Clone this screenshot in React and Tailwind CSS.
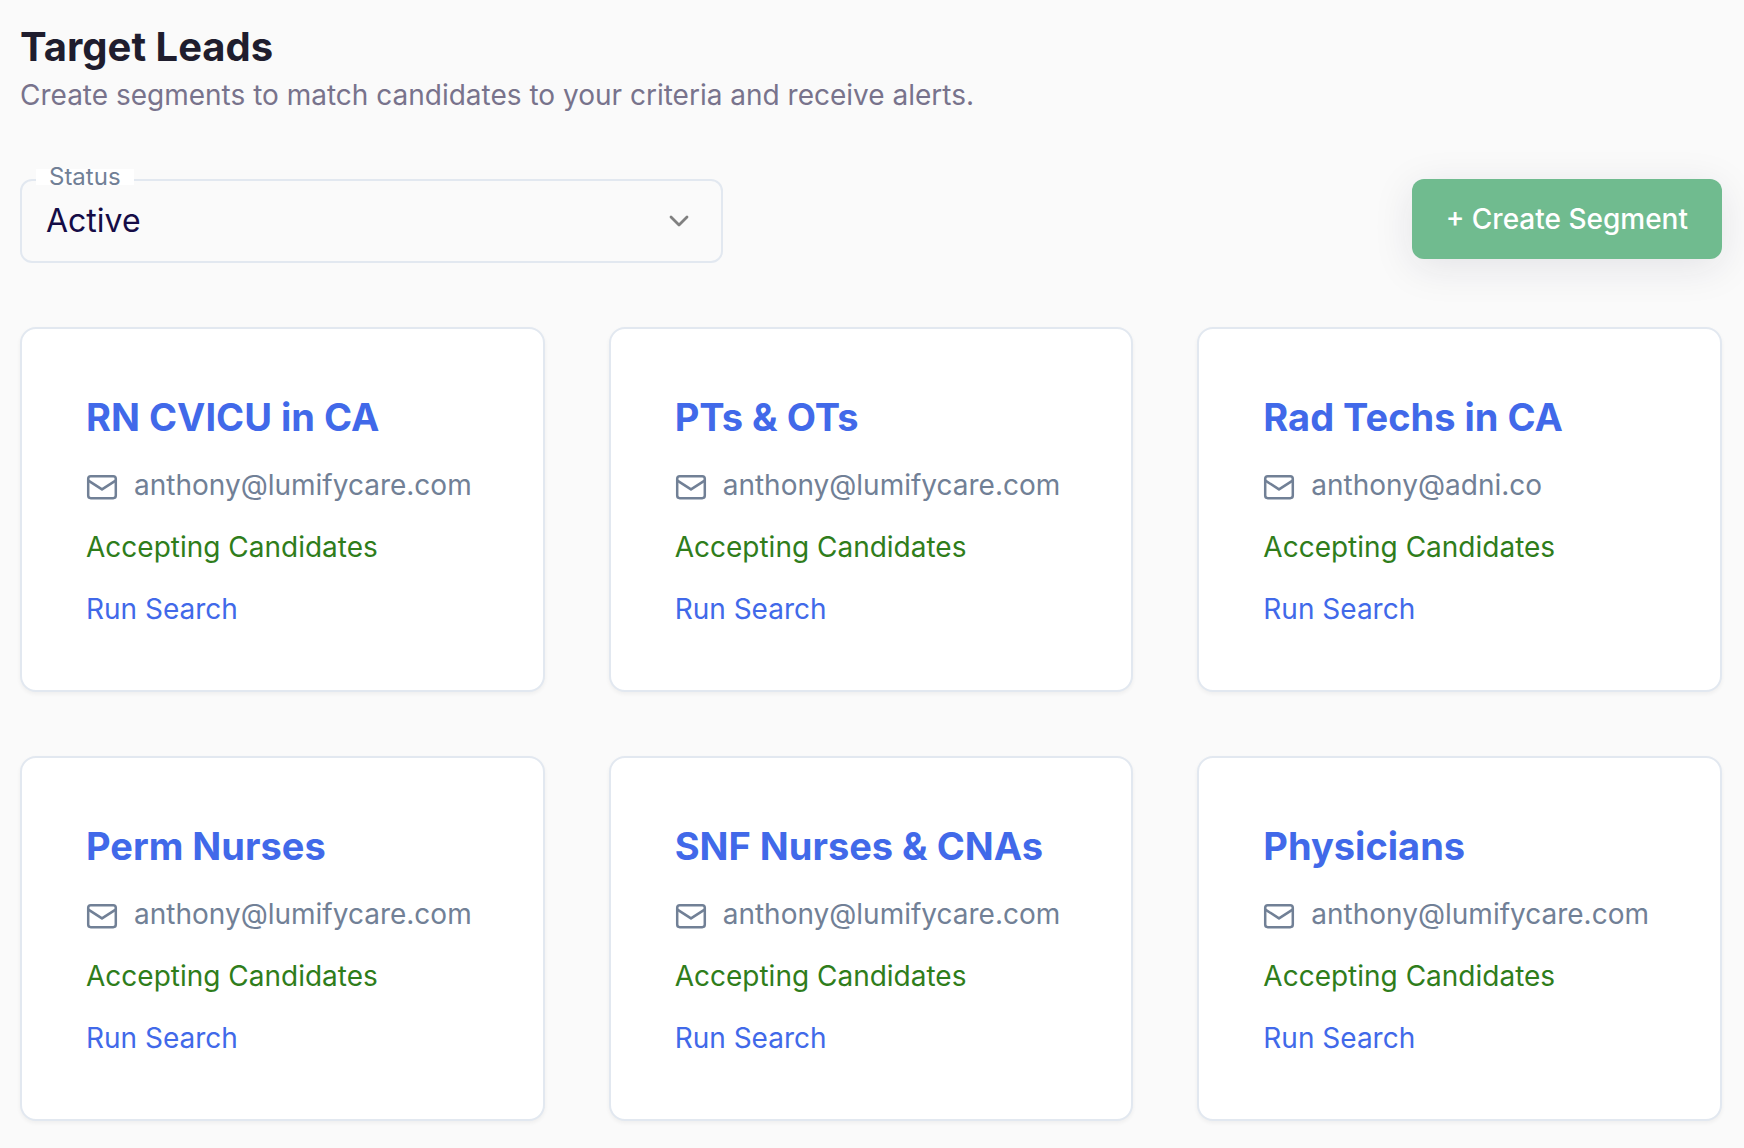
import { useState } from "react";

const SEGMENTS = [
  { id: 1, name: "RN CVICU in CA", email: "anthony@lumifycare.com", status: "active" },
  { id: 2, name: "PTs & OTs", email: "anthony@lumifycare.com", status: "active" },
  { id: 3, name: "Rad Techs in CA", email: "anthony@adni.co", status: "active" },
  { id: 4, name: "Perm Nurses", email: "anthony@lumifycare.com", status: "active" },
  { id: 5, name: "SNF Nurses & CNAs", email: "anthony@lumifycare.com", status: "active" },
  { id: 6, name: "Physicians", email: "anthony@lumifycare.com", status: "active" },
];

function MailIcon() {
  return (
    <svg
      viewBox="0 0 32 32"
      className="mt-1 size-8 shrink-0"
      fill="none"
      stroke="currentColor"
      strokeWidth="2.5"
      strokeLinecap="round"
      strokeLinejoin="round"
      aria-hidden="true"
    >
      <rect x="2.2" y="5.2" width="27.6" height="22" rx="2.6" />
      <path d="M2.4 9.6L16 18.4L29.6 9.6" />
    </svg>
  );
}

function StatusSelect({ value, onChange }) {
  return (
    <div className="relative w-[41.3%]">
      <label
        htmlFor="status"
        className="absolute -top-[10px] left-4 bg-white px-[13px] text-[24px] leading-[16px] text-[#718096]"
      >
        Status
      </label>
      <select
        id="status"
        value={value}
        onChange={(e) => onChange(e.target.value)}
        className="h-[84px] w-full appearance-none rounded-xl border-2 border-[#e2e8f0] bg-transparent px-6 text-[32px] text-[#150c46] focus:outline-none"
      >
        <option value="active">Active</option>
        <option value="inactive">Inactive</option>
      </select>
      <svg
        viewBox="0 0 24 24"
        className="pointer-events-none absolute top-[30px] right-8 size-6"
        fill="none"
        stroke="#808080"
        strokeWidth="2.8"
        strokeLinecap="round"
        strokeLinejoin="round"
        aria-hidden="true"
      >
        <path d="M4 8l8 8 8-8" />
      </svg>
    </div>
  );
}

function SegmentCard({ segment }) {
  return (
    <article className="rounded-2xl border-2 border-[#e2e8f0] bg-white px-16 pt-16 pb-[60px] shadow-[0_2px_4px_rgba(0,0,0,0.05)]">
      <h2 className="text-[38px] leading-[48px] font-bold text-[#4169e9]">{segment.name}</h2>
      <div className="mt-[23px] flex flex-col gap-5 text-[28px] leading-[42px]">
        <div className="flex items-center gap-4 text-[#718096]">
          <MailIcon />
          <span>{segment.email}</span>
        </div>
        <p className="text-[#2f7d1b]">Accepting Candidates</p>
        <a href="#search" className="self-start text-[#4169e9]">
          Run Search
        </a>
      </div>
    </article>
  );
}

export default function App() {
  const [status, setStatus] = useState("active");
  const visible = SEGMENTS.filter((s) => s.status === status);

  return (
    <main className="min-h-screen bg-[#fafafa] pt-5 pr-[22px] pb-7 pl-5 font-['Inter',sans-serif]">
      <header>
        <h1 className="text-[40px] leading-[54px] font-bold text-[#1f1d2e]">Target Leads</h1>
        <p className="text-[28px] leading-[42px] text-[#78738c]">
          Create segments to match candidates to your criteria and receive alerts.
        </p>
      </header>

      <div className="mt-[63px] flex items-start justify-between">
        <StatusSelect value={status} onChange={setStatus} />
        <button
          type="button"
          className="h-20 rounded-xl bg-[#70bb8f] px-[34px] text-[28px] font-medium text-white shadow-[0_8px_40px_rgba(30,27,57,0.1)]"
        >
          + Create Segment
        </button>
      </div>

      <section className="mt-16 grid grid-cols-3 gap-16">
        {visible.map((segment) => (
          <SegmentCard key={segment.id} segment={segment} />
        ))}
      </section>
    </main>
  );
}
